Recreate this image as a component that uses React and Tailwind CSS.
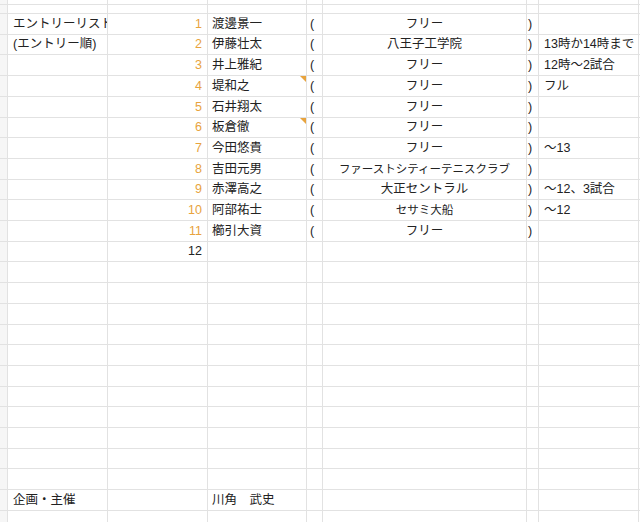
import React from "react";

const rows = [
  { a: "エントリーリスト", n: "1", name: "渡邊景一", p: true, club: "フリー", memo: "" },
  { a: "(エントリー順)", n: "2", name: "伊藤壮太", p: true, club: "八王子工学院", memo: "13時か14時まで" },
  { n: "3", name: "井上雅紀", p: true, club: "フリー", memo: "12時〜2試合" },
  { n: "4", name: "堤和之", note: true, p: true, club: "フリー", memo: "フル" },
  { n: "5", name: "石井翔太", p: true, club: "フリー" },
  { n: "6", name: "板倉徹", note: true, p: true, club: "フリー" },
  { n: "7", name: "今田悠貴", p: true, club: "フリー", memo: "〜13" },
  { n: "8", name: "吉田元男", p: true, club: "ファーストシティーテニスクラブ", small: true },
  { n: "9", name: "赤澤高之", p: true, club: "大正セントラル", memo: "〜12、3試合" },
  { n: "10", name: "阿部祐士", p: true, club: "セサミ大船", small: true, memo: "〜12" },
  { n: "11", name: "櫛引大資", p: true, club: "フリー" },
  { n: "12", plain: true },
  {}, {}, {}, {}, {}, {}, {}, {}, {}, {},
  {},
  { a: "企画・主催", name: "川角　武史" },
  {},
];

const cols = "grid grid-cols-[8px_100px_100px_99px_16px_204px_12px_100px_1px]";
const cell = "border-r border-b border-[#e2e2e2] overflow-hidden whitespace-nowrap flex items-end pb-[2px] leading-[16px]";

function Row({ r, h }) {
  return (
    <div className={`${cols} ${h}`}>
      <div className={`${cell} bg-[#f6f6f6]`} />
      <div className={`${cell} pl-[5px]`}>{r.a}</div>
      <div className={`${cell} justify-end pr-[5px] ${r.plain ? "text-[#222]" : "text-[#e8a33d]"}`}>{r.n}</div>
      <div className={`${cell} pl-[4px] relative`}>
        {r.name}
        {r.note && (
          <span className="absolute top-0 right-0 w-0 h-0 border-t-[6px] border-l-[6px] border-t-[#e8a33d] border-l-transparent" />
        )}
      </div>
      <div className={`${cell} pl-[3px]`}>{r.p ? "(" : ""}</div>
      <div className={`${cell} justify-center ${r.small ? "text-[11.5px]" : ""}`}>{r.club}</div>
      <div className={`${cell} pl-[1px]`}>{r.p ? ")" : ""}</div>
      <div className={`${cell} pl-[5px]`}>{r.memo}</div>
      <div className="border-b border-[#e2e2e2]" />
    </div>
  );
}

export default function App() {
  return (
    <div
      className="w-[640px] h-[522px] overflow-hidden bg-white text-[12.5px] text-[#222]"
      style={{ fontFamily: '"Liberation Sans", "Noto Sans CJK JP", sans-serif' }}
    >
      <Row r={{}} h="h-[5px]" />
      <Row r={{}} h="h-[9px]" />
      {rows.map((r, i) => (
        <Row key={i} r={r} h="h-[20.71px]" />
      ))}
    </div>
  );
}
